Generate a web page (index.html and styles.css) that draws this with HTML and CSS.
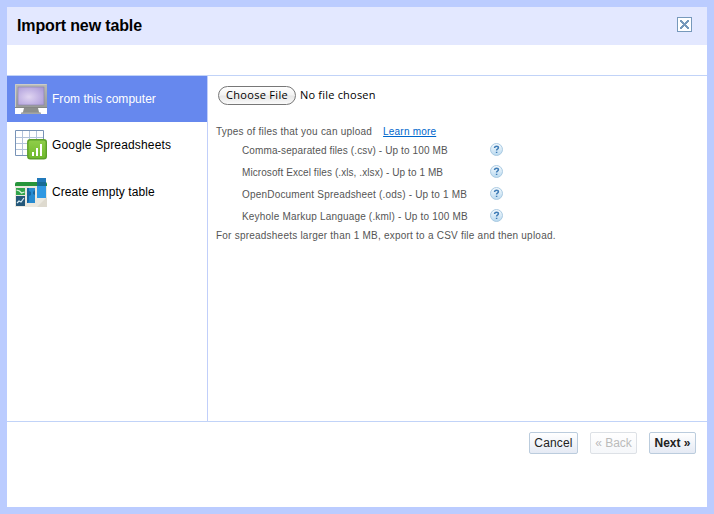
FILE: index.html
```html
<!DOCTYPE html>
<html lang="en">
<head>
<meta charset="utf-8">
<title>Import new table</title>
<link rel="stylesheet" href="styles.css">
</head>
<body>
<svg class="defs" width="0" height="0" aria-hidden="true">
  <defs>
    <radialGradient id="screen" cx=".42" cy=".55" r=".75"><stop offset="0" stop-color="#e0d5f1"/><stop offset=".5" stop-color="#c4b6e5"/><stop offset="1" stop-color="#a998d4"/></radialGradient>
    <linearGradient id="metal" x2="0" y2="1"><stop offset="0" stop-color="#b9bab8"/><stop offset="1" stop-color="#999b99"/></linearGradient>
    <linearGradient id="green" x2="0" y2="1"><stop offset="0" stop-color="#90ce4a"/><stop offset="1" stop-color="#6fb92b"/></linearGradient>
    <linearGradient id="ball" x2="0" y2="1"><stop offset="0" stop-color="#f7fbfe"/><stop offset="1" stop-color="#b9d9ef"/></linearGradient>
    <symbol id="help" viewBox="0 0 13 13">
      <circle cx="6.5" cy="6.5" r="6" fill="url(#ball)" stroke="#a3c5df" stroke-width=".9"/>
      <path d="M4.6 5V4.6Q4.8 3.3 6.5 3.3Q8.4 3.3 8.4 4.8Q8.4 5.6 7.5 6.1Q6.6 6.6 6.6 7.5M6.6 8.7V10" fill="none" stroke="#3f7cb6" stroke-width="1.5"/>
    </symbol>
  </defs>
</svg>
<div class="dialog">
  <header class="title">
    <h1>Import new table</h1>
    <svg class="close" width="15" height="15" viewBox="0 0 15 15">
      <rect x=".5" y=".5" width="14" height="14" fill="#fff" stroke="#7799bb"/>
      <path d="M3 3h2v1h1v1h1v1h1V5h1V4h1V3h2v2h-1v1h-1v1H9v1h1v1h1v1h1v2h-2v-1H9v-1H8V9H7v1H6v1H5v1H3v-2h1V9h1V8h1V7H5V6H4V5H3z" fill="#7799bb" shape-rendering="crispEdges"/>
    </svg>
  </header>
  <main class="content">
    <nav class="sources">
      <div class="source selected">
        <svg width="32" height="30" viewBox="0 0 32 30">
          <path d="M0 24h32v6H0z" fill="#fff"/>
          <path d="M9 24h14l1 4 2 2H6l2-2z" fill="#8d8f8d"/>
          <path d="M6 28.500h20V30H6z" fill="#a5a7a5"/>
          <rect width="32" height="24" fill="url(#metal)"/>
          <path d="M.5 23.5V.5h31" fill="none" stroke="#cbcbc8"/>
          <path d="M0 23.500h32" stroke="#858785"/>
          <rect x="3" y="3" width="26" height="18" fill="url(#screen)" stroke="#8581a8" stroke-width=".6"/>
        </svg>
        <span class="t1">From this computer</span>
      </div>
      <div class="source">
        <svg width="32" height="30" viewBox="0 0 32 30">
          <path d="M7.5 1v24M14.5 1v24M21.5 1v24M0 7.5h28M0 13.5h28M0 19.5h28" stroke="#b3c3da" fill="none"/>
          <path d="M.5 25.500V.5h28v25z" stroke="#7893b7" fill="none"/>
          <rect x="12.800" y="9.800" width="18.500" height="19" rx="2.500" fill="url(#green)" stroke="#5b9f29" stroke-width="1.400"/>
          <path d="M17 22h2v4h-2zM21 18h2v8h-2zM25 14h2v12h-2z" fill="#fff"/>
        </svg>
        <span class="t2">Google Spreadsheets</span>
      </div>
      <div class="source">
        <svg width="32" height="31" viewBox="0 0 32 31">
          <path d="M0 9h32v21H0z" fill="#ebe8df"/>
          <path d="M22 30 32 20V30z" fill="#dedacf"/>
          <path d="M0 7q0-2 2-2h28q2 0 2 2v2H0z" fill="#27953b"/>
          <path d="M1 11h9v7H1z" fill="#31a44b"/>
          <path d="m1.500 13 3 1 2 2 3-1" stroke="#d9f2dc" stroke-width="1.300" fill="none"/>
          <path d="M1 19h9v10H1z" fill="#245779"/>
          <path d="m2 26 2-2 2 1 3-4" stroke="#d9edf5" stroke-width="1.200" fill="none"/>
          <path d="M12 11h8v15h-8z" fill="#268ad0"/>
          <path d="M12 26V11h2v3l2 1v3l-2 1v5l-1 2zM18 15l2-2v5l-2-1z" fill="#17669f"/>
          <path d="M22 1h9v20h-9z" fill="#2f98e2"/>
          <path d="M22 5h9v4h-9z" fill="#176b96"/>
          <path d="M22 1h9v4h-9z" fill="#2179ba"/>
        </svg>
        <span class="t3">Create empty table</span>
      </div>
    </nav>
    <section class="upload">
      <div class="picker"><button class="choose"><span>Choose File</span></button><span class="nofile">No file chosen</span></div>
      <div class="hint"><span class="t4">Types of files that you can upload</span><a href="#">Learn more</a></div>
      <ul class="types">
        <li><span class="l1">Comma-separated files (.csv) - Up to 100 MB</span><svg width="13" height="13"><use href="#help"/></svg></li>
        <li><span class="l2">Microsoft Excel files (.xls, .xlsx) - Up to 1 MB</span><svg width="13" height="13"><use href="#help"/></svg></li>
        <li><span class="l3">OpenDocument Spreadsheet (.ods) - Up to 1 MB</span><svg width="13" height="13"><use href="#help"/></svg></li>
        <li><span class="l4">Keyhole Markup Language (.kml) - Up to 100 MB</span><svg width="13" height="13"><use href="#help"/></svg></li>
      </ul>
      <p class="note">For spreadsheets larger than 1 MB, export to a CSV file and then upload.</p>
    </section>
  </main>
  <footer class="actions">
    <button class="btn cancel">Cancel</button>
    <button class="btn back" disabled>« Back</button>
    <button class="btn next">Next »</button>
  </footer>
</div>
</body>
</html>
```
FILE: styles.css
```css
* { box-sizing: border-box; }
body { margin: 0; font-family: "Liberation Sans", Arial, sans-serif; color: #000; }
.defs { display: block; height: 0; }
.dialog { width: 714px; height: 514px; border: 7px solid #bbccff; background: #fff; display: flex; flex-direction: column; }
.title { height: 38px; flex: none; background: #e3e8ff; display: flex; align-items: center; justify-content: space-between; padding: 0 15px 3px 10px; }
h1 { margin: 0; padding-top: 3px; font-size: 16px; line-height: 20px; letter-spacing: -0.14px; }
.content { margin-top: 30px; height: 347px; flex: none; display: flex; border-top: 1px solid #c1d3f8; border-bottom: 1px solid #c1d3f8; }
.sources { width: 201px; flex: none; border-right: 1px solid #c1cffa; }
.source { height: 46px; margin-bottom: 1px; display: flex; align-items: center; gap: 5px; padding-left: 8px; font-size: 12px; white-space: nowrap; }
.source svg { flex: none; }
.t1 { letter-spacing: 0.03px; }
.t2 { letter-spacing: 0.16px; }
.t3 { letter-spacing: 0.07px; }
.selected { background: #6688ee; color: #fff; margin-bottom: 0; }
.upload { padding: 9px 0 0 8px; color: #555; font-size: 10px; letter-spacing: 0.225px; white-space: nowrap; }
.picker { display: flex; align-items: center; height: 20px; padding-left: 2px; gap: 4px; color: #000; font: 11px/14px "Open Sans", "Noto Sans", sans-serif; }
.choose { width: 78px; height: 19px; padding: 0; border: 1px solid #777; border-radius: 10px; background: linear-gradient(#fff, #f3f3f3 48%, #e6e6e6 52%, #fafafa); font: inherit; color: #000; line-height: 14px; letter-spacing: 0.3px; }
.nofile { letter-spacing: 0.2px; }
.hint { margin-top: 21px; height: 12px; line-height: 12px; display: flex; }
.hint a { color: #0066cc; margin-left: 11px; letter-spacing: 0.2px; }
.types { list-style: none; margin: 0; padding: 0 0 0 26px; }
.types li { height: 22px; display: flex; width: 261px; justify-content: space-between; align-items: center; }
.types li span { padding-top: 2px; }
.l1 { letter-spacing: 0.12px; }
.l2 { letter-spacing: 0.08px; }
.l3, .l4 { letter-spacing: 0.19px; }
.note { margin: 4px 0 0; line-height: 12px; }
.actions { display: flex; justify-content: flex-end; gap: 12px; padding: 10px 11px 0 0; }
.btn { height: 22px; padding: 0; border: 1px solid #bbccdd; border-radius: 2px; background: linear-gradient(#fff, #e5eaf4); font: 12px/18px "Liberation Sans", Arial, sans-serif; color: #222; }
.cancel { width: 49px; letter-spacing: 0.15px; }
.back { width: 47px; color: #bbb; border-color: #dde1e6; background: linear-gradient(#fff, #f5f7fa); }
.next { width: 47px; font-weight: bold; }
```
